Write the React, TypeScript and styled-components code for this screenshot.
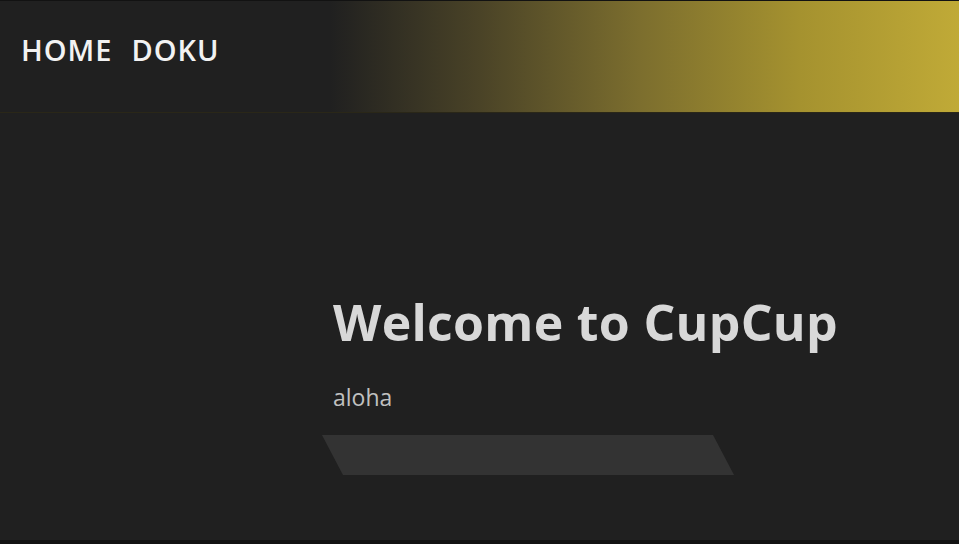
import React from "react";
import styled, { createGlobalStyle } from "styled-components";

const Global = createGlobalStyle`
  html, body { margin: 0; padding: 0; background: #111; }
  body { font-family: "Open Sans", "Liberation Sans", sans-serif; }
  * { box-sizing: border-box; }
`;

const Page = styled.div`
  width: 959px;
  height: 544px;
  background: #202020;
  border-top: 1px solid #121212;
  border-bottom: 4px solid #121212;
  display: flex;
  flex-direction: column;
  overflow: hidden;
`;

const Header = styled.header`
  height: 112px;
  display: flex;
  align-items: center;
  padding-left: 21px;
  background: linear-gradient(
    to right,
    #202020 0px,
    #202020 330px,
    #4a4327 480px,
    #7c6e2e 640px,
    #a5922f 800px,
    #c0aa37 959px
  );
  border-bottom: 1px solid #2a2718;
`;

const Nav = styled.nav`
  display: flex;
  gap: 19px;
  margin-top: -14px;
`;

const NavLink = styled.a`
  font-family: "Open Sans", "Liberation Sans", sans-serif;
  font-weight: 600;
  font-size: 29px;
  letter-spacing: 1px;
  color: #f2f2f2;
  text-decoration: none;
`;

const Main = styled.main`
  flex: 1;
  display: flex;
  flex-direction: column;
  padding: 179px 0 0 333px;
`;

const Title = styled.h1`
  margin: 0;
  font-family: "Open Sans", "Liberation Sans", sans-serif;
  font-weight: 700;
  font-size: 50px;
  letter-spacing: 0.3px;
  line-height: 60px;
  color: #d8d8d8;
`;

const Lead = styled.p`
  margin: 31px 0 0;
  font-size: 23px;
  line-height: 28px;
  color: #c0c0c0;
`;

const Slant = styled.div`
  margin: 24px 0 0 -11px;
  width: 412px;
  height: 40px;
  background: #333333;
  clip-path: polygon(0 0, 391px 0, 100% 100%, 21px 100%);
`;

export default function App() {
  return (
    <>
      <Global />
      <Page>
        <Header>
          <Nav>
            <NavLink href="#">HOME</NavLink>
            <NavLink href="#">DOKU</NavLink>
          </Nav>
        </Header>
        <Main>
          <Title>Welcome to CupCup</Title>
          <Lead>aloha</Lead>
          <Slant />
        </Main>
      </Page>
    </>
  );
}
